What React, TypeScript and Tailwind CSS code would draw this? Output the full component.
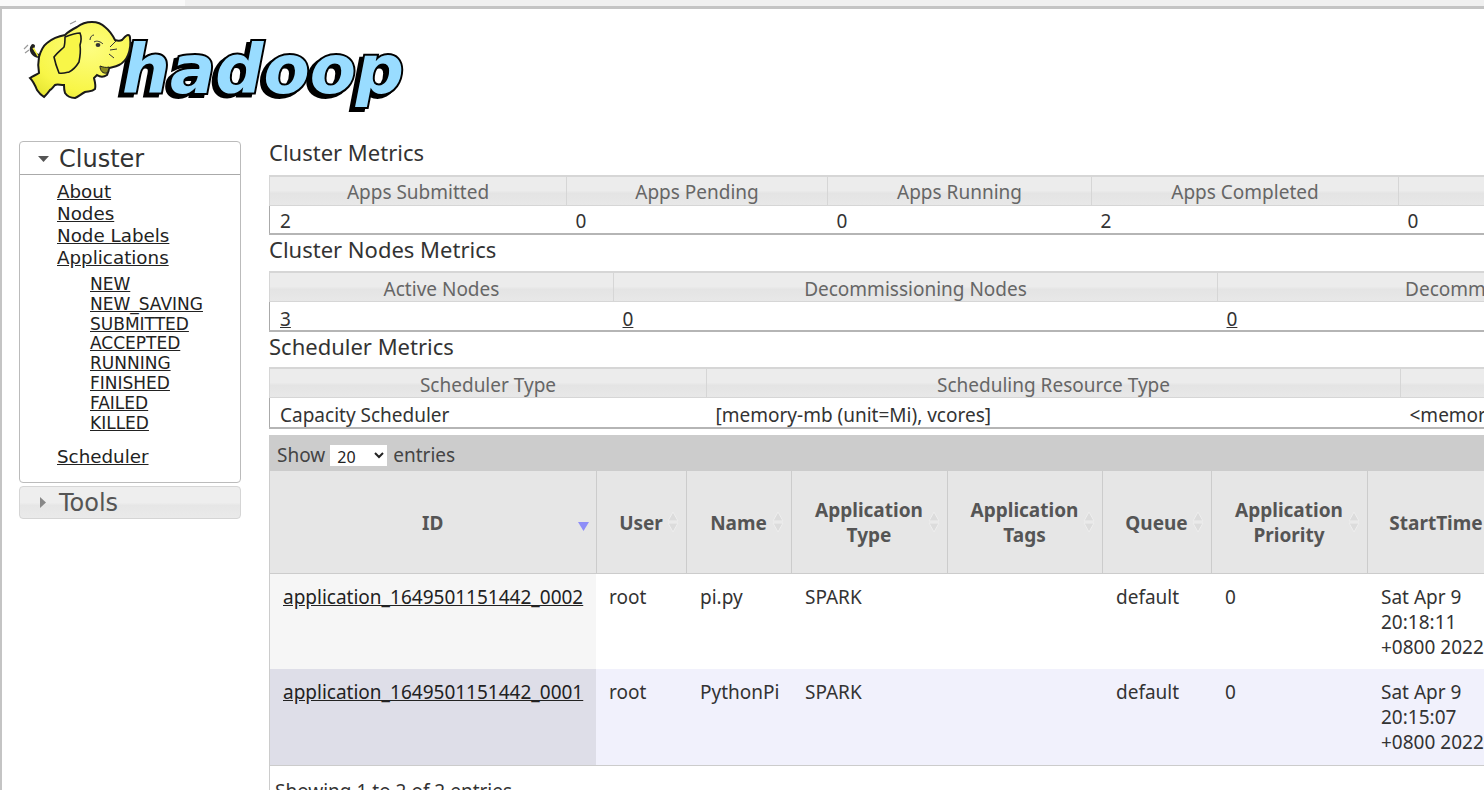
const mainFont = "font-['Noto_Sans',sans-serif]"

function Logo() {
  return (
    <svg width="420" height="131" viewBox="0 9 420 131" className="block">
      <defs>
        <radialGradient id="hide" cx="0.6" cy="0.35" r="0.8">
          <stop offset="0" stopColor="#fdfd80" />
          <stop offset="0.7" stopColor="#f8f648" />
          <stop offset="1" stopColor="#e4e430" />
        </radialGradient>
      </defs>
      <text
        x="120"
        y="93"
        textLength="282"
        lengthAdjust="spacingAndGlyphs"
        fontFamily="DejaVu Sans, sans-serif"
        fontWeight="700"
        fontStyle="italic"
        fontSize="68"
        fill="#99dcff"
        stroke="#000"
        strokeWidth="4"
        paintOrder="stroke"
        className="[filter:drop-shadow(-4px_3px_0_#000)]"
      >
        hadoop
      </text>
      <path d="M37 56C31 55 28 50 31 46" fill="none" stroke="#222" strokeWidth="4" strokeLinecap="round" />
      <path d="M31 48C33 50 34 53 36 56" fill="none" stroke="#f7f53a" strokeWidth="1.5" />
      <path
        d="M37 57C39 50 41 46 45 43C51 38 57 36 63 35C67 31 71 29 75 27C80 23 85 22 90 22C96 22 100 24 103 27C108 31 111 36 113 40C116 41 118 41 120 40C122 38 124 35 126 35C128 35 128 37 128 38C129 44 128 50 126 55C124 60 121 63 117 65C113 67 110 67 107 68C107 71 106 73 105 75C102 77 98 77 95 75L92 78C93 82 94 86 93 89C90 92 86 91 83 92C79 94 76 97 73 98C68 98 65 96 63 93C62 90 62 88 62 85C58 85 55 84 53 85C51 87 50 89 48 90C46 93 44 95 42 97C39 95 37 93 35 90C33 85 31 81 28 78C31 76 34 75 37 73C36 67 36 62 37 57Z"
        fill="url(#hide)"
        stroke="#1a1a1a"
        strokeWidth="2"
      />
      <path d="M63 37C68 35 73 33 78 33C80 38 79 42 78 45C79 52 78 57 77 62C74 67 71 70 67 72C63 73 60 74 57 73C55 68 53 62 52 57C55 53 59 50 62 47C63 44 63 40 63 37Z" fill="#f8f648" stroke="#1a1a1a" strokeWidth="1.6" />
      <ellipse cx="96" cy="45" rx="2.4" ry="2" fill="#333" />
      <path d="M88 40C88 37 90 35 92 35M92 42C95 40 99 42 101 44M108 47L114 41M108 50L115 49M107 54L112 58" fill="none" stroke="#333" strokeWidth="1" />
      <path d="M98 66C98 71 101 74 105 73C106 71 107 69 107 67C104 68 101 67 98 66Z" fill="#8a8a20" stroke="#222" strokeWidth="1" />
      <path d="M68 24L74 21M22 49L26 45M23 53L27 50" stroke="#999" strokeWidth="1.2" />
    </svg>
  )
}

function NavLink({ label, small }: { label: string; small?: boolean }) {
  return (
    <li className={small ? 'h-[19.8px] leading-[20px] text-[17px]' : 'h-[22px] leading-[22px] text-[18.3px]'}>
      <a href="#" className="underline text-[#222]">
        {label}
      </a>
    </li>
  )
}

function Sidebar() {
  const subLinks = ['NEW', 'NEW_SAVING', 'SUBMITTED', 'ACCEPTED', 'RUNNING', 'FINISHED', 'FAILED', 'KILLED']
  return (
    <aside className="w-[222px] ml-[19px] mr-[28px] shrink-0 [font-family:'DejaVu_Sans',sans-serif]">
      <div className="h-[342px] rounded-[4px] border border-[#bbb]">
        <div className="h-[33px] pt-[2px] flex items-center border-b border-[#aaa] pl-[18px]">
          <svg width="11" height="6" viewBox="0 0 11 6" className="mr-[10px]">
            <path d="M0 0h11L5.5 6z" fill="#555" />
          </svg>
          <span className="text-[24px] text-[#333]">Cluster</span>
        </div>
        <ul className="pl-[37px] pt-[6px]">
          <NavLink label="About" />
          <NavLink label="Nodes" />
          <NavLink label="Node Labels" />
          <NavLink label="Applications" />
        </ul>
        <ul className="pl-[70px] pt-[5px]">
          {subLinks.map((label) => (
            <NavLink key={label} label={label} small />
          ))}
        </ul>
        <ul className="pl-[37px] pt-[14px]">
          <NavLink label="Scheduler" />
        </ul>
      </div>
      <div className="mt-[3px] h-[33px] flex items-center rounded-[4px] border border-[#d5d5d5] bg-[linear-gradient(#eeeeee,#eeeeee_50%,#e6e6e6_60%,#eaeaea)] pl-[20px]">
        <svg width="6" height="11" viewBox="0 0 6 11" className="mr-[13px]">
          <path d="M0 0v11L6 5.5z" fill="#888" />
        </svg>
        <span className="text-[24px] text-[#555]">Tools</span>
      </div>
    </aside>
  )
}

function MetricsTable({
  columns,
  cells,
  link,
  headPad = 'pt-[4px]',
  rowClass = 'h-[29px]',
  cellPad = 'pt-[5px]',
}: {
  columns: { label: string; width: number }[]
  cells: string[]
  link?: boolean
  headPad?: string
  rowClass?: string
  cellPad?: string
}) {
  return (
    <table className="table-fixed border-collapse w-[1800px] text-[19px]">
      <colgroup>
        {columns.map((c) => (
          <col key={c.label} style={{ width: c.width }} />
        ))}
      </colgroup>
      <thead>
        <tr className="h-[29px] bg-[linear-gradient(#ececec,#ececec_50%,#e4e4e4_60%,#e8e8e8)]">
          {columns.map((c) => (
            <th key={c.label} className={`p-0 ${headPad} font-normal text-[#666] border-x border-t-2 border-b border-[#d6d6d6] leading-none`}>
              {c.label}
            </th>
          ))}
        </tr>
      </thead>
      <tbody>
        <tr className={rowClass}>
          {cells.map((v, i) => (
            <td key={i} className={`p-0 ${cellPad} text-[#333] leading-none border-b-2 border-[#b5b5b5] ${i === 0 ? 'pl-[10px] border-l border-l-[#aaa]' : 'pl-[9px]'}`}>
              {link ? <a href="#" className="underline">{v}</a> : v}
            </td>
          ))}
        </tr>
      </tbody>
    </table>
  )
}

function SortArrows({ active }: { active?: boolean }) {
  if (active) {
    return (
      <svg width="11" height="9" viewBox="0 0 11 9" className="absolute right-[7px] top-[51px]">
        <path d="M0 0h11L5.5 9z" fill="#8e8ef8" />
      </svg>
    )
  }
  return (
    <svg width="12" height="22" viewBox="0 0 12 22" className="absolute right-[7px] top-[40px]">
      <path d="M6 1L11 10H1zM6 21L1 12H11z" fill="#dcdcdc" stroke="#eeeeee" strokeWidth="1" />
    </svg>
  )
}

const appColumns = [
  { label: 'ID', width: 326 },
  { label: 'User', width: 90 },
  { label: 'Name', width: 105 },
  { label: 'Application Type', width: 156 },
  { label: 'Application Tags', width: 155 },
  { label: 'Queue', width: 109 },
  { label: 'Application Priority', width: 156 },
  { label: 'StartTime', width: 138 },
  { label: 'FinishTime', width: 65 },
]

const apps = [
  { id: 'application_1649501151442_0002', name: 'pi.py', time: ['Sat Apr 9', '20:18:11', '+0800 2022'] },
  { id: 'application_1649501151442_0001', name: 'PythonPi', time: ['Sat Apr 9', '20:15:07', '+0800 2022'] },
]

function AppsTable() {
  const cell = 'p-0 pt-[11px] pl-[14px] align-top text-[#333] leading-[25px]'
  return (
    <section className="mt-[6px] border-l border-t border-[#ccc] w-[1800px]">
      <div className="h-[35px] bg-[#cccccc] flex items-center pl-[7px] pt-[3px] text-[19px] text-[#444]">
        Show
        <select defaultValue="20" className="ml-[5px] mr-[6px] w-[57px] h-[21px] bg-white text-[16px] text-[#222] pl-[3px]">
          <option>10</option>
          <option>20</option>
          <option>50</option>
        </select>
        entries
      </div>
      <table className="table-fixed border-collapse w-[1300px] text-[19px]">
        <colgroup>
          {appColumns.map((c) => (
            <col key={c.label} style={{ width: c.width }} />
          ))}
        </colgroup>
        <thead>
          <tr className="h-[102px] bg-[#e6e6e6]">
            {appColumns.map((c, i) => (
              <th key={c.label} className="relative p-0 pt-[3px] px-[18px] font-bold text-[#555] leading-[25px] border-r border-b border-[#ccc]">
                {c.label}
                <SortArrows active={i === 0} />
              </th>
            ))}
          </tr>
        </thead>
        <tbody>
          {apps.map((app, i) => (
            <tr key={app.id} className={i === 0 ? 'h-[96px] bg-white' : 'h-[96px] bg-[#f1f1fc] border-b border-[#ccc]'}>
              <td className={`p-0 pt-[11px] pl-[13px] align-top text-[#222] leading-[25px] ${i === 0 ? 'bg-[#f6f6f6]' : 'bg-[#dedee8]'}`}>
                <a href="#" className="underline">{app.id}</a>
              </td>
              <td className="p-0 pt-[11px] pl-[13px] align-top text-[#333] leading-[25px]">root</td>
              <td className={cell}>{app.name}</td>
              <td className={cell}>SPARK</td>
              <td className="p-0" />
              <td className={cell}>default</td>
              <td className={cell}>0</td>
              <td className={cell}>
                {app.time.map((t) => (
                  <div key={t} className="whitespace-nowrap">{t}</div>
                ))}
              </td>
              <td className="p-0" />
            </tr>
          ))}
        </tbody>
      </table>
      <p className="pt-[13px] pl-[5px] text-[19px] leading-[25px] text-[#333]">Showing 1 to 2 of 2 entries</p>
    </section>
  )
}

export default function App() {
  return (
    <div className={`${mainFont} w-[1484px] h-[790px] overflow-hidden bg-white`}>
      <div className="h-[6px] bg-[linear-gradient(90deg,#fafafa_185px,#f0f0f0_185px)]" />
      <div className="h-[3px] bg-[#c4c4c4]" />
      <div className="border-l-2 border-[#c4c4c4] h-[781px]">
        <Logo />
        <div className="flex -ml-[2px] pt-[1px]">
          <Sidebar />
          <main className="min-w-0">
            <h3 className="h-[34px] leading-[22px] text-[22px] text-[#333]">Cluster Metrics</h3>
            <MetricsTable
              columns={[
                { label: 'Apps Submitted', width: 297 },
                { label: 'Apps Pending', width: 261 },
                { label: 'Apps Running', width: 264 },
                { label: 'Apps Completed', width: 307 },
                { label: 'Containers Pending', width: 671 },
              ]}
              cells={['2', '0', '0', '2', '0']}
            />
            <h3 className="h-[36px] pt-[1px] leading-[26px] text-[22px] text-[#333]">Cluster Nodes Metrics</h3>
            <MetricsTable
              columns={[
                { label: 'Active Nodes', width: 344 },
                { label: 'Decommissioning Nodes', width: 604 },
                { label: 'Decommissioned Nodes', width: 592 },
                { label: 'Lost Nodes', width: 260 },
              ]}
              cells={['3', '0', '0', '0']}
              link
              headPad="pt-[6px]"
              rowClass="h-[30px]"
              cellPad="pt-[7px]"
            />
            <h3 className="h-[35px] pt-[1px] leading-[26px] text-[22px] text-[#333]">Scheduler Metrics</h3>
            <MetricsTable
              columns={[
                { label: 'Scheduler Type', width: 437 },
                { label: 'Scheduling Resource Type', width: 694 },
                { label: 'Minimum Allocation', width: 669 },
              ]}
              cells={['Capacity Scheduler', '[memory-mb (unit=Mi), vcores]', '<memory:1024, vCores:1>']}
              headPad="pt-[6px]"
              rowClass="h-[31px]"
              cellPad="pt-[7px]"
            />
            <AppsTable />
          </main>
        </div>
      </div>
    </div>
  )
}
